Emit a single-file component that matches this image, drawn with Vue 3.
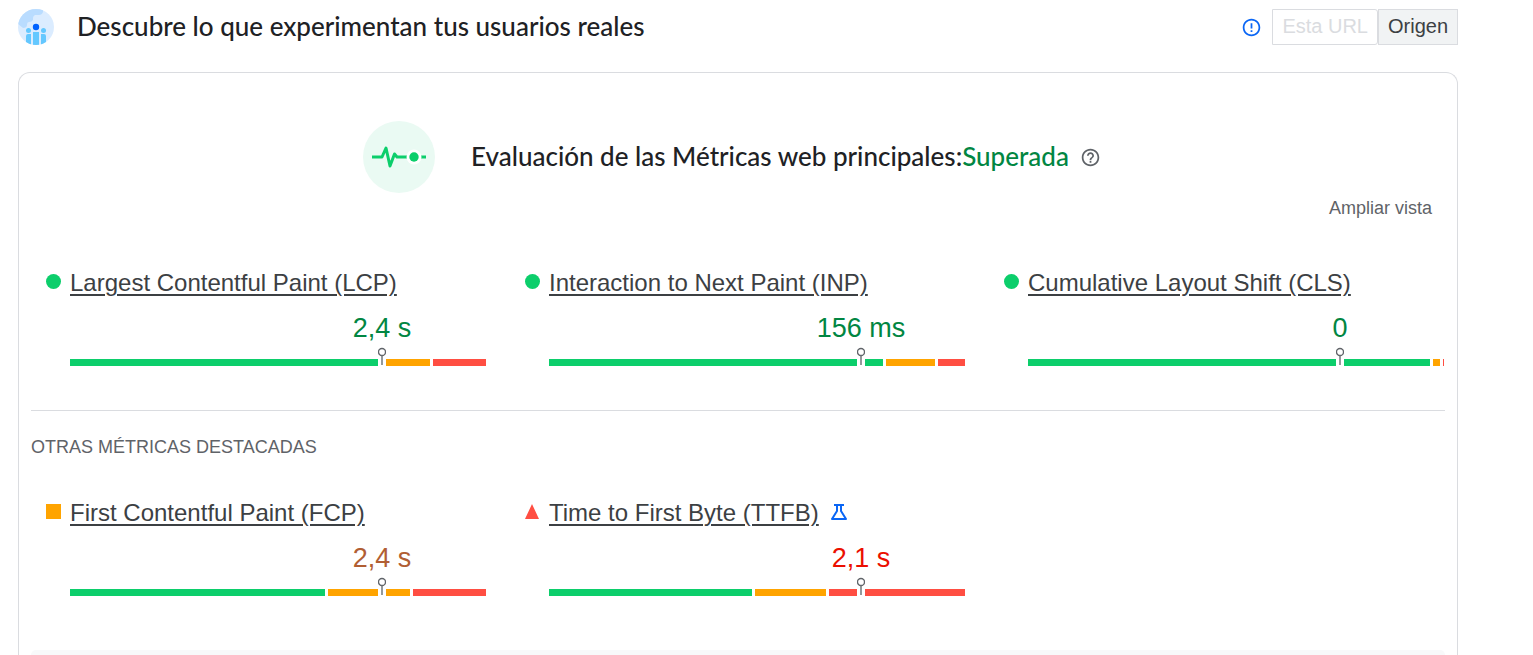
<script setup>
const coreMetrics = [
  { name: 'Largest Contentful Paint (LCP)', value: '2,4 s', rating: 'good', bars: [313, 44, 53] },
  { name: 'Interaction to Next Paint (INP)', value: '156 ms', rating: 'good', bars: [334, 49, 27] },
  { name: 'Cumulative Layout Shift (CLS)', value: '0', rating: 'good', bars: [402, 7, 1] }
]
const otherMetrics = [
  { name: 'First Contentful Paint (FCP)', value: '2,4 s', rating: 'average', bars: [255, 82, 73] },
  { name: 'Time to First Byte (TTFB)', value: '2,1 s', rating: 'poor', bars: [203, 71, 136], experimental: true }
]
const groups = [
  { id: 'core', metrics: coreMetrics },
  { id: 'other', title: 'Otras métricas destacadas', metrics: otherMetrics }
]
const levels = ['good', 'average', 'poor']
</script>

<template>
  <main class="page">
    <header class="top">
      <svg class="logo" viewBox="0 0 36 36" aria-hidden="true">
        <defs><clipPath id="disc"><circle cx="18" cy="18" r="18" /></clipPath></defs>
        <g clip-path="url(#disc)">
          <rect width="36" height="36" fill="#dbecff" />
          <path d="M0 0H25V3Q24 6 21 6H17Q15 7 15 9V11Q14 13 11 13Q9 13 9 16Q9 19 5 19L0 15Z" fill="#b9dcff" />
          <g fill="#64c8ff">
            <circle cx="10.500" cy="21.500" r="2.500" /><circle cx="25.500" cy="21.500" r="2.500" />
            <path d="M8 36V27Q8 25 10 25H13V36ZM15 36V23H21V36ZM23 36V25H26Q28 25 28 27V36Z" />
          </g>
          <circle cx="18" cy="18" r="3.200" fill="#0062ff" />
        </g>
      </svg>
      <h1>Descubre lo que experimentan tus usuarios reales</h1>
      <div class="scope">
        <svg class="info" viewBox="0 0 24 24" aria-hidden="true">
          <path fill="#0a66f5" d="M11 15h2v2h-2zm0-8h2v6h-2zm.99-5C6.470 2 2 6.480 2 12s4.470 10 9.990 10C17.520 22 22 17.520 22 12S17.520 2 11.990 2zM12 20c-4.420 0-8-3.580-8-8s3.580-8 8-8 8 3.580 8 8-3.580 8-8 8z" />
        </svg>
        <div class="toggle">
          <button type="button" disabled>Esta URL</button>
          <button type="button" class="selected">Origen</button>
        </div>
      </div>
    </header>

    <section class="card">
      <div class="summary">
        <svg class="pulse" viewBox="0 0 72 72" aria-hidden="true">
          <circle cx="36" cy="36" r="36" fill="#eafaf3" />
          <path d="M9 36H19L23 27L27 45L31.500 33L34 36H44M58 36H63" fill="none" stroke="#0cce6b" stroke-width="3" stroke-linejoin="round" />
          <circle cx="51" cy="36" r="7.500" fill="#fff" />
          <circle cx="51" cy="36" r="4.700" fill="#0cce6b" />
        </svg>
        <h2>Evaluación de las Métricas web principales:<span>Superada</span></h2>
        <svg class="help" viewBox="0 0 24 24" aria-hidden="true">
          <path fill="#5f6368" d="M11 18h2v-2h-2v2zm1-16C6.480 2 2 6.480 2 12s4.480 10 10 10 10-4.480 10-10S17.520 2 12 2zm0 18c-4.410 0-8-3.590-8-8s3.590-8 8-8 8 3.590 8 8-3.590 8-8 8zm0-14c-2.210 0-4 1.790-4 4h2c0-1.100.9-2 2-2s2 .9 2 2c0 2-3 1.750-3 5h2c0-2.250 3-2.500 3-5 0-2.210-1.790-4-4-4z" />
        </svg>
      </div>
      <div class="expand"><button type="button">Ampliar vista</button></div>

      <section v-for="group in groups" :key="group.id" :class="['group', group.id]">
        <h3 v-if="group.title">{{ group.title }}</h3>
        <div class="grid">
          <article v-for="metric in group.metrics" :key="metric.name" :class="['metric', metric.rating]">
            <div class="name">
              <svg class="mark" viewBox="0 0 15 15" aria-hidden="true">
                <circle v-if="metric.rating === 'good'" cx="7.500" cy="7.500" r="7.500" fill="#0cce6b" />
                <rect v-else-if="metric.rating === 'average'" width="15" height="15" fill="#ffa400" />
                <path v-else d="M7 0L14 15H0Z" fill="#ff4e42" />
              </svg>
              <a href="#">{{ metric.name }}</a>
              <svg v-if="metric.experimental" class="flask" viewBox="0 0 18 18" aria-hidden="true">
                <path d="M4 2H14M7 2V8L2 16H16L11 8V2" fill="none" stroke="#0a66f5" stroke-width="2" stroke-linejoin="round" />
              </svg>
            </div>
            <div class="chart">
              <div class="value">{{ metric.value }}</div>
              <div class="bar">
                <i v-for="(size, n) in metric.bars" :key="n" :class="levels[n]" :style="{ flexGrow: size }"></i>
                <svg class="pin" viewBox="0 0 8 20" aria-hidden="true">
                  <rect y="12" width="8" height="8" fill="#fff" />
                  <circle cx="4" cy="5" r="3.500" fill="#fff" stroke="#5f6368" stroke-width="1.300" />
                  <path d="M4 8.500V18" stroke="#70777a" stroke-width="1.500" />
                </svg>
              </div>
            </div>
          </article>
        </div>
      </section>
      <div class="details"></div>
    </section>
  </main>
</template>

<style>
body { margin: 0; background: #fff; }
</style>

<style scoped>
.page {
  padding: 9px 75px 0 18px;
  font-family: "Liberation Sans", Arial, sans-serif;
  color: #3c4043;
}
.top { display: flex; align-items: center; height: 36px; }
.logo { width: 36px; height: 36px; margin-right: 23px; }
h1, h2 {
  margin: 0;
  padding-bottom: 2px;
  font-family: "Google Sans", Lato, sans-serif;
  font-size: 26px;
  line-height: 34px;
  font-weight: 500;
  color: #202124;
  white-space: nowrap;
}
h2 span { color: #018642; }
.scope { display: flex; align-items: center; gap: 10px; margin-left: auto; }
.info, .help { width: 21px; height: 21px; }
.toggle { display: flex; }
.toggle button {
  height: 36px;
  padding: 0 9px 2px;
  border: 1px solid #dadce0;
  background: #fff;
  font: 20px/32px "Liberation Sans", Arial, sans-serif;
}
.toggle button:disabled { color: #dadce0; border-radius: 0 3px 3px 0; }
.toggle .selected { background: #f1f3f4; color: #3c4043; }
.card {
  margin-top: 27px;
  border: 1px solid #dadce0;
  border-bottom: 0;
  border-radius: 12px 12px 0 0;
}
.summary { display: flex; justify-content: center; align-items: center; padding: 48px 12px 0 0; }
.pulse { width: 72px; height: 72px; margin-right: 36px; }
.help { margin-left: 11px; }
.expand { display: flex; justify-content: flex-end; padding: 0 25px; }
.expand button {
  padding: 0;
  border: 0;
  background: none;
  color: #5f6368;
  font: 18px/30px "Liberation Sans", Arial, sans-serif;
}
.grid { display: grid; grid-template-columns: repeat(3, 1fr); padding-right: 1px; }
.metric { padding: 0 12px 0 27px; }
.name { display: flex; align-items: center; height: 36px; font-size: 24px; }
.name a { color: #3c4043; text-underline-offset: 3px; text-decoration-thickness: 2px; white-space: nowrap; }
.mark { width: 15px; height: 15px; margin: 0 9px 4px 0; }
.flask { width: 18px; height: 18px; margin: 0 0 3px 11px; }
.chart { padding-left: 24px; }
.value { margin: 9px 0 0 50%; text-align: center; font-size: 27px; line-height: 36px; }
.metric.good .value { color: #018642; }
.metric.average .value { color: #b15e33; }
.metric.poor .value { color: #eb0f00; }
.bar { position: relative; display: flex; gap: 3px; height: 7px; margin-top: 13px; }
.bar i { flex-basis: 0; }
.bar .good { background: #0cce6b; }
.bar .average { background: #ffa400; }
.bar .poor { background: #ff4e42; }
.pin { position: absolute; bottom: -1px; left: calc(75% - 4px); width: 8px; height: 20px; }
.core { padding-top: 42px; }
.other { margin-top: 44px; }
h3 {
  margin: 0 12px;
  padding-top: 18px;
  border-top: 1px solid #dadce0;
  color: #5f6368;
  font-size: 18px;
  line-height: 36px;
  font-weight: 400;
  text-transform: uppercase;
}
.other .grid { padding-top: 30px; }
.details { height: 5px; margin: 54px 12px 0; border-radius: 5px 5px 0 0; background: #f8f9fa; }
</style>
